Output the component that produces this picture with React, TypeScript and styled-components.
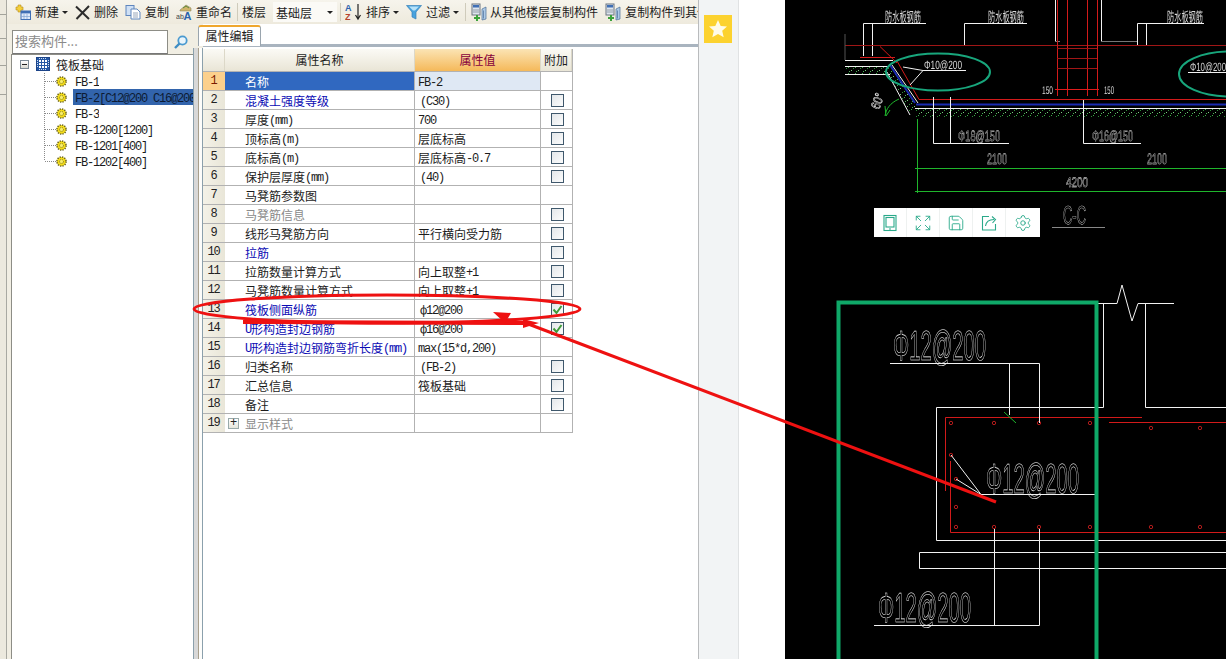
import React from "react";
import styled, { createGlobalStyle } from "styled-components";
import { Expand, Save, Settings } from "lucide-react";

const Global = createGlobalStyle`
  html, body { margin: 0; padding: 0; background: #fff; }
  body { font-family: "Noto Sans CJK SC", "Liberation Sans", sans-serif; font-size: 12px; color: #1c1c1c; }
`;

const Page = styled.div`
  position: relative;
  display: flex;
  width: 1226px;
  height: 659px;
  overflow: hidden;
  background: #fff;
`;

const AppWindow = styled.div`
  display: flex;
  flex: 0 0 698px;
  width: 698px;
  overflow: hidden;
  background: #f1eee3;
`;

const EdgeTabs = styled.div`
  flex: 0 0 7px;
  display: flex;
  flex-direction: column;
  background: #ece9de;
  border-right: 1px solid #a9a9a2;
  box-sizing: border-box;
`;

const EdgeTab = styled.div<{ $h: number }>`
  height: ${(p) => p.$h}px;
  flex: 0 0 auto;
  border-bottom: 1px solid #a3a39b;
  margin-bottom: 2px;
`;

const Main = styled.div`
  flex: 1;
  min-width: 0;
  display: flex;
  flex-direction: column;
`;

const Toolbar = styled.div`
  height: 24px;
  flex: 0 0 24px;
  display: flex;
  align-items: center;
  gap: 7px;
  padding-left: 8px;
  white-space: nowrap;
  overflow: hidden;
  background: linear-gradient(#f6f4ec, #eeeadd);
`;

const Tool = styled.div<{ $gap?: number }>`
  display: flex;
  flex: 0 0 auto;
  align-items: center;
  gap: ${(p) => p.$gap ?? 4}px;
  line-height: 16px;
`;

const Caret = styled.span`
  width: 0;
  height: 0;
  margin-left: -1px;
  border-left: 3px solid transparent;
  border-right: 3px solid transparent;
  border-top: 3px solid #222;
`;

const Separator = styled.span<{ $l: number; $r: number }>`
  flex: 0 0 1px;
  height: 18px;
  background: #cfcbbb;
  margin: 0 ${(p) => p.$r}px 0 ${(p) => p.$l}px;
`;

const Combo = styled.div`
  width: 64px;
  height: 20px;
  flex: 0 0 64px;
  box-sizing: border-box;
  display: flex;
  align-items: center;
  justify-content: space-between;
  padding: 0 4px 0 3px;
  background: #fbfaf6;
`;

const Body = styled.div`
  flex: 1;
  min-height: 0;
  display: flex;
`;

const LeftPanel = styled.div`
  flex: 0 0 186px;
  width: 186px;
  min-width: 0;
  display: flex;
  flex-direction: column;
  padding: 6px 0 0 4px;
  box-sizing: border-box;
`;

const SearchRow = styled.div`
  display: flex;
  height: 24px;
  flex: 0 0 24px;
  padding-left: 1px;
`;

const SearchInput = styled.div`
  width: 156px;
  box-sizing: border-box;
  background: #fff;
  border: 1px solid #8d8d86;
  border-bottom-color: #777;
  color: #8a8a8a;
  line-height: 20px;
  padding-left: 2px;
  font-size: 13px;
`;

const SearchButton = styled.div`
  flex: 1;
  display: flex;
  align-items: center;
  justify-content: center;
`;

const TreeBox = styled.div`
  flex: 1;
  min-width: 0;
  background: #fff;
  border-left: 1px solid #8d8d86;
  border-top: 1px solid #8d8d86;
  padding-top: 2px;
  overflow: hidden;
`;

const TreeRoot = styled.div`
  height: 16px;
  box-sizing: border-box;
  display: flex;
  align-items: center;
  padding: 0 0 2px 8px;
  font-size: 12px;
  gap: 6px;
`;

const Expander = styled.span`
  width: 9px;
  height: 9px;
  box-sizing: border-box;
  border: 1px solid #7b8a96;
  background: linear-gradient(#fff, #d8d8d0);
  display: flex;
  align-items: center;
  justify-content: center;
  margin-right: 1px;
  &::before {
    content: "";
    width: 5px;
    height: 1px;
    background: #222;
  }
`;

const TreeList = styled.div`
  margin: 0 0 0 32px;
  border-left: 1px dotted #8a8a8a;
  height: 87px;
`;

const TreeItem = styled.div`
  height: 16px;
  display: flex;
  align-items: center;
  white-space: nowrap;
  &::before {
    content: "";
    width: 11px;
    flex: 0 0 11px;
    border-top: 1px dotted #8a8a8a;
  }
`;

const TreeLabel = styled.span<{ $selected?: boolean }>`
  margin-left: 6px;
  padding-left: 2px;
  flex: ${(p) => (p.$selected ? "1" : "0 0 auto")};
  min-width: 0;
  height: 16px;
  line-height: 17px;
  overflow: hidden;
  color: ${(p) => (p.$selected ? "#0d1b33" : "#1c1c1c")};
  background: ${(p) => (p.$selected ? "#3264ac" : "transparent")};
`;

const Splitter = styled.div`
  flex: 0 0 10px;
  margin-top: 24px;
  background: linear-gradient(
    to right,
    #8ba0ac 0 1px,
    #d8d8d8 1px 5px,
    #a89f8c 5px 6px,
    #fdfdfb 6px 9px,
    #8ba0ac 9px 10px
  );
`;

const RightPanel = styled.div`
  flex: 1;
  min-width: 0;
  display: flex;
  flex-direction: column;
  background: #fff;
`;

const TabStrip = styled.div`
  height: 23px;
  flex: 0 0 23px;
  box-sizing: border-box;
  border-bottom: 3px solid #a9b4bf;
  padding-top: 1px;
  display: flex;
`;

const Tab = styled.div`
  position: relative;
  z-index: 1;
  margin-left: -5px;
  width: 63px;
  height: 21px;
  box-sizing: border-box;
  background: #fff;
  border: 1px solid #9aa5ae;
  border-top: 2px solid #efa72e;
  border-bottom: none;
  border-radius: 3px 3px 0 0;
  line-height: 18px;
  text-align: center;
  font-size: 12px;
`;

const PropGrid = styled.div`
  margin-top: 2px;
  width: 370px;
  box-sizing: border-box;
  border-right: 1px solid #b2b2b2;
`;

const GridRow = styled.div<{ $header?: boolean }>`
  display: grid;
  grid-template-columns: 22px 190px 126px 31px;
  height: ${(p) => (p.$header ? 23 : 19)}px;
  box-sizing: border-box;
  border-bottom: 1px solid #b2b2b2;
`;

const HeaderCell = styled.div<{ $active?: boolean }>`
  display: flex;
  align-items: center;
  justify-content: center;
  padding-bottom: 1px;
  box-sizing: border-box;
  border-right: 1px solid #dcd8c8;
  color: ${(p) => (p.$active ? "#86003c" : "#1c1c1c")};
  background: ${(p) =>
    p.$active
      ? "linear-gradient(#fbe4b4, #f5b95a)"
      : "linear-gradient(#fbfaf5, #e9e5d6)"};
`;

const NumCell = styled.div<{ $active?: boolean }>`
  display: flex;
  align-items: center;
  justify-content: center;
  font-family: "Liberation Mono", monospace;
  font-size: 12px;
  letter-spacing: -1.2px;
  padding-right: 1px;
  color: ${(p) => (p.$active ? "#7a1a00" : "#222")};
  background: ${(p) =>
    p.$active ? "#fcd08c" : "linear-gradient(to right, #f4f2e8, #e9e6d8)"};
`;

type NameKind = "normal" | "link" | "muted" | "selected";
const NAME_COLORS: Record<NameKind, string> = {
  normal: "#1c1c1c",
  link: "#0b0bb4",
  muted: "#8a8a8a",
  selected: "#fff",
};

const NameCell = styled.div<{ $kind: NameKind; $plus?: boolean }>`
  display: flex;
  align-items: center;
  padding-left: ${(p) => (p.$plus ? 3 : 20)}px;
  gap: 6px;
  white-space: nowrap;
  overflow: hidden;
  color: ${(p) => NAME_COLORS[p.$kind]};
  background: ${(p) => (p.$kind === "selected" ? "#3068c0" : "#fff")};
  border-right: 1px solid #b2b2b2;
`;

const PlusBox = styled.span`
  width: 11px;
  height: 11px;
  box-sizing: border-box;
  border: 1px solid #9aa;
  background: linear-gradient(#fff, #e6e6dc);
  color: #222;
  font-family: "Liberation Mono", monospace;
  font-size: 12px;
  line-height: 9px;
  text-align: center;
`;

const ValueCell = styled.div<{ $selected?: boolean; $indent?: boolean }>`
  display: flex;
  align-items: center;
  padding-left: ${(p) => (p.$indent ? 5 : 3)}px;
  white-space: nowrap;
  overflow: hidden;
  background: ${(p) => (p.$selected ? "#dfe8f4" : "#fff")};
  border-right: 1px solid #b2b2b2;
`;

const AddCell = styled.div`
  display: flex;
  align-items: center;
  justify-content: center;
  padding-left: 1px;
  background: #fff;
`;

const CheckBox = styled.span`
  width: 13px;
  height: 13px;
  box-sizing: border-box;
  border: 1px solid #3f586c;
  background: linear-gradient(135deg, #e3e7ea, #fcfcfc);
  display: flex;
  align-items: center;
  justify-content: center;
`;

const Latin = styled.span`
  font-family: "Liberation Mono", monospace;
  font-size: 12px;
  letter-spacing: -1.2px;
  vertical-align: 1px;
`;

const StarRail = styled.div`
  flex: 0 0 41px;
  box-sizing: border-box;
  background: #f2f4f5;
  border-left: 1px solid #b9bbbd;
  border-right: 1px solid #e0e2e3;
  padding: 15px 0 0 5px;
`;

const StarBox = styled.div`
  width: 28px;
  height: 28px;
  background: #fcd22f;
  display: flex;
  align-items: center;
  justify-content: center;
`;

const Gutter = styled.div`
  flex: 0 0 46px;
  background: #fff;
`;

const CadPanel = styled.div`
  position: relative;
  flex: 0 0 441px;
  height: 659px;
  background: #000;
`;

const CadSvg = styled.svg`
  display: block;
  width: 441px;
  height: 659px;
  will-change: transform;
`;

const CadLabel = styled.text<{ $outline?: number }>`
  font-family: "Liberation Sans", "Noto Sans CJK SC", sans-serif;
  text-rendering: geometricPrecision;
  fill: ${(p) => (p.$outline ? "none" : "#d8d8d8")};
  stroke: ${(p) => (p.$outline ? "#fff" : "none")};
  stroke-width: ${(p) => p.$outline ?? 0};
`;

const FloatBar = styled.div`
  position: absolute;
  left: 89px;
  top: 208px;
  display: flex;
  height: 29px;
  background: #fff;
`;

const FloatButton = styled.div`
  width: 33px;
  box-sizing: border-box;
  display: flex;
  align-items: center;
  justify-content: center;
  color: #2aa98a;
  border-right: 1px solid #eef1f0;
  &:last-child {
    border-right: none;
    width: 34px;
  }
`;

const Annotation = styled.svg`
  position: absolute;
  left: 0;
  top: 0;
  width: 1226px;
  height: 659px;
  pointer-events: none;
`;

function mixed(text: string) {
  const parts = text.match(/[\x20-\x7eф]+|[^\x20-\x7eф]+/g) ?? [];
  return parts.map((part, i) =>
    /^[\x20-\x7eф]/.test(part) ? <Latin key={i}>{part}</Latin> : <span key={i}>{part}</span>
  );
}

const NewIcon = () => (
  <svg width="16" height="16" viewBox="0 0 16 16">
    <path d="M1 3h2V1h3v2h2v3H6v2H3V6H1z" fill="#f4cf3a" stroke="#b68a1c" strokeWidth=".6" />
    <rect x="6" y="7" width="9.5" height="8.5" fill="#dfeafa" stroke="#3f6fb5" />
    <rect x="6" y="7" width="9.5" height="2.4" fill="#3f6fb5" />
    <path d="M9 10v5M12 10v5M6 12.5h9" stroke="#7fa2d0" strokeWidth=".7" />
  </svg>
);
const DeleteIcon = () => (
  <svg width="15" height="15" viewBox="0 0 15 15">
    <path d="M1 1.5 14 14M14 1 1.5 14" stroke="#2c2c2c" strokeWidth="2" fill="none" />
  </svg>
);
const CopyIcon = () => (
  <svg width="16" height="16" viewBox="0 0 16 16">
    <rect x="1" y="1.5" width="8" height="10" fill="#cfe0f5" stroke="#5f86bd" />
    <path d="M6 5h6l3 3v7H6z" fill="#fff" stroke="#5f86bd" />
    <path d="M8 9h5M8 11h5M8 13h5" stroke="#7d8fa8" strokeWidth=".8" />
  </svg>
);
const RenameIcon = () => (
  <svg width="16" height="16" viewBox="0 0 16 16">
    <path d="M4 6 10 1l5 3v3H4z" fill="#d0b46a" stroke="#8d8a6a" strokeWidth=".6" />
    <path d="M7 4l3-2 3 2" stroke="#5d8a3d" fill="none" />
    <text x="0" y="15" fontSize="7" fontFamily="Liberation Sans" fill="#444">ab</text>
    <text x="7.5" y="15.5" fontSize="11" fontWeight="700" fontFamily="Liberation Sans" fill="#2b62ad">A</text>
  </svg>
);
const SortIcon = () => (
  <svg width="17" height="18" viewBox="0 0 17 18">
    <text x="0" y="8" fontSize="9" fontWeight="700" fontFamily="Liberation Sans" fill="#2b62ad">A</text>
    <text x="0" y="17" fontSize="9" fontWeight="700" fontFamily="Liberation Sans" fill="#b5432e">Z</text>
    <path d="M13 1v14M10.5 12l2.5 4 2.5-4" stroke="#222" strokeWidth="1.2" fill="none" />
  </svg>
);
const FunnelIcon = () => (
  <svg width="16" height="16" viewBox="0 0 16 16">
    <path d="M0.5 1.5h15L10 8v7l-4-2V8z" fill="#49a3de" stroke="#3b82b8" strokeWidth=".7" />
    <path d="M3 2.5h10L9 6.5H7z" fill="#b8e2f8" />
  </svg>
);
const FloorCopyIcon = () => (
  <svg width="16" height="18" viewBox="0 0 16 18">
    <rect x="1" y="1" width="8" height="11" fill="#dfe6ee" stroke="#6b7480" />
    <rect x="2" y="2" width="6" height="2.5" fill="#3f6fb5" />
    <path d="M2 7h6M2 9h6" stroke="#7d8a98" strokeWidth=".8" />
    <path d="M3 14h2v-2h2v2h2v2H7v2H5v-2H3z" fill="#3ca33c" />
    <path d="M11 6l4-2v12l-4 1zM12.5 7.5v8" fill="#aecbe8" stroke="#4c6f96" strokeWidth=".7" />
  </svg>
);
const SearchIcon = () => (
  <svg width="16" height="16" viewBox="0 0 16 16">
    <circle cx="9.5" cy="6.5" r="4.2" fill="#eaf5fb" stroke="#4a9ad0" strokeWidth="1.8" />
    <path d="M6.5 9.5 2 14" stroke="#3f8dc4" strokeWidth="2.4" />
  </svg>
);
const RootIcon = () => (
  <svg width="14" height="14" viewBox="0 0 14 14">
    <rect x=".5" y=".5" width="13" height="13" fill="#2557a4" stroke="#1c4488" />
    <rect x="3" y="3" width="8" height="8" fill="#fff" />
    <path d="M5.5 3v8M8.5 3v8M3 5.5h8M3 8.5h8" stroke="#2557a4" />
    <path d="M1.5 3v8M12.5 3v8M3 1.5h8M3 12.5h8" stroke="#cfe0f5" strokeDasharray="1 1" />
  </svg>
);
const GearIcon = () => (
  <svg width="11" height="11" viewBox="0 0 11 11">
    <circle cx="5.5" cy="5.5" r="4.6" fill="#f4dc18" stroke="#6b6420" strokeWidth="1.5" strokeDasharray="1.3 1.1" />
    <circle cx="5.5" cy="5.5" r="2" fill="#f8ee6a" stroke="#6b6420" strokeWidth=".8" strokeDasharray="1 .8" />
  </svg>
);
const Check = () => (
  <svg width="11" height="11" viewBox="0 0 11 11">
    <path d="M1.5 5.5 4.5 9 9.5 2" stroke="#3f9a3a" strokeWidth="2" fill="none" />
  </svg>
);

const TabletIcon = () => (
  <svg width="18" height="18" viewBox="0 0 18 18" fill="none" stroke="currentColor" strokeWidth="1.1">
    <rect x="3" y="1.5" width="12" height="15" />
    <rect x="5" y="3.5" width="8" height="9.5" />
    <path d="M8 15h2" />
  </svg>
);

const ShareIcon = () => (
  <svg width="18" height="18" viewBox="0 0 18 18" fill="none" stroke="currentColor" strokeWidth="1.1">
    <path d="M9 2.5H2.5v13.5h13V10" />
    <path d="M5.5 12c.5-4 3.5-6.5 8.5-6.5" />
    <path d="M12 2.5 15.5 5.5 12.5 9" />
  </svg>
);

type Row = { name: string; value?: string; kind?: NameKind; check?: boolean; checked?: boolean; plus?: boolean; indent?: boolean };
const ROWS: Row[] = [
  { name: "名称", value: "FB-2", kind: "selected" },
  { name: "混凝土强度等级", value: "(C30)", kind: "link", check: true, indent: true },
  { name: "厚度(mm)", value: "700", check: true },
  { name: "顶标高(m)", value: "层底标高", check: true },
  { name: "底标高(m)", value: "层底标高-0.7", check: true },
  { name: "保护层厚度(mm)", value: "(40)", check: true, indent: true },
  { name: "马凳筋参数图" },
  { name: "马凳筋信息", kind: "muted", check: true },
  { name: "线形马凳筋方向", value: "平行横向受力筋", check: true },
  { name: "拉筋", kind: "link", check: true },
  { name: "拉筋数量计算方式", value: "向上取整+1", check: true },
  { name: "马凳筋数量计算方式", value: "向上取整+1", check: true },
  { name: "筏板侧面纵筋", value: "ф12@200", kind: "link", check: true, checked: true, indent: true },
  { name: "U形构造封边钢筋", value: "ф16@200", kind: "link", check: true, checked: true, indent: true },
  { name: "U形构造封边钢筋弯折长度(mm)", value: "max(15*d,200)", kind: "link" },
  { name: "归类名称", value: "(FB-2)", check: true, indent: true },
  { name: "汇总信息", value: "筏板基础", check: true },
  { name: "备注", check: true },
  { name: "显示样式", kind: "muted", plus: true },
];

const TREE = ["FB-1", "FB-2[C12@200 C16@200]", "FB-3", "FB-1200[1200]", "FB-1201[400]", "FB-1202[400]"];

const W = "#f2f2f2";
const R = "#d21a1a";
const DR = "#a01616";
const G = "#1fb52c";

function Seg({ d, c = W, w = 1 }: { d: string; c?: string; w?: number }) {
  return <path d={d} stroke={c} strokeWidth={w} fill="none" />;
}

const BAR_TOP: [number, number][] = [[951, 423], [994, 423], [1039, 423], [1090, 423], [1151, 428], [1200, 428]];
const BAR_BOTTOM: [number, number][] = [[956, 527], [994, 527], [1039, 527], [1090, 527], [1151, 527], [1200, 527]];
const BAR_LEFT: [number, number][] = [[951, 455], [956, 479], [956, 507]];

function CadDrawing() {
  return (
    <CadSvg viewBox="785 0 441 659">
      <defs>
        <pattern id="speckle" width="7" height="6" patternUnits="userSpaceOnUse">
          <rect x="1" y="1" width="1" height="1" fill="#3fb04a" />
          <rect x="4" y="4" width="1" height="1" fill="#7ccc80" />
          <rect x="6" y="2" width="1" height="1" fill="#2a8f36" />
          <rect x="2" y="5" width="1" height="1" fill="#4ab854" />
        </pattern>
      </defs>

      {/* upper section */}
      <Seg d="M863.5 23.5H926M863.5 23.5V56M872.5 23.5V56" />
      <Seg d="M964.5 23.5H1027M964.5 23.5V46" />
      <Seg d="M1137.5 23.5H1204M1137.5 23.5V46M1146.5 23.5V46" />
      <Seg d="M1055.5 0V41M1101.5 0V41" />
      <Seg d="M1101 41.5H1137M1060 41.5H1055" c="#777" />
      <Seg d="M845 45.5H1226" c={DR} />
      <Seg d="M845 34V60" c="#555" />
      <Seg d="M1057.5 0V96M1067.5 0V96M1087.5 0V96M1097.5 0V96" c={R} />
      <Seg d="M1057 48.5H1097M1057 58.5H1097M1057 68.5H1097" c={DR} />
      <Seg d="M845 60.5H893M845 66.5H888M845 74.5H890" />
      <Seg d="M860 57.5H895M880 46.5 897 63" c={R} />
      <rect x="845" y="67" width="45" height="7" fill="url(#speckle)" />
      <polygon points="887,72 910,115 917,108 893,68" fill="url(#speckle)" />
      <Seg d="M892 65 918 103" />
      <Seg d="M890 65 915 103" c="#1a2bb0" w={2} />
      <Seg d="M887 72 910 115" />
      <Seg d="M897 61 919 99.5H1226" c={R} />
      <Seg d="M916 104.5H1226" c="#1a2bb0" w={2} />
      <Seg d="M915 108.5H1226" />
      <rect x="915" y="109" width="311" height="8" fill="url(#speckle)" />
      <Seg d="M885 116c1-7 5-13 14-17M885 106l1 10 4-6" c={G} />
      <CadLabel x={0} y={0} fontSize={13} textLength={16} lengthAdjust="spacingAndGlyphs" transform="translate(879,110) rotate(-70)" $outline={0.5}>60°</CadLabel>

      <ellipse cx="938" cy="72" rx="52" ry="18.5" fill="none" stroke="#18a67c" strokeWidth="2" />
      <ellipse cx="1230" cy="74" rx="51" ry="22.5" fill="none" stroke="#18a67c" strokeWidth="2" />
      <CadLabel x={924} y={69} fontSize={12} textLength={38} lengthAdjust="spacingAndGlyphs">Φ10@200</CadLabel>
      <Seg d="M966 70.5H923L903 67M923 70.5 910 85" />
      <CadLabel x={1190} y={71} fontSize={12} textLength={36} lengthAdjust="spacingAndGlyphs">Φ10@200</CadLabel>
      <Seg d="M1188 72.5H1226" />

      <CadLabel x={885} y={22} fontSize={14} textLength={36} lengthAdjust="spacingAndGlyphs">防水板钢筋</CadLabel>
      <CadLabel x={988} y={22} fontSize={14} textLength={36} lengthAdjust="spacingAndGlyphs">防水板钢筋</CadLabel>
      <CadLabel x={1167} y={22} fontSize={14} textLength={36} lengthAdjust="spacingAndGlyphs">防水板钢筋</CadLabel>

      <CadLabel x={1042} y={94} fontSize={11} textLength={11} lengthAdjust="spacingAndGlyphs">150</CadLabel>
      <CadLabel x={1104} y={94} fontSize={11} textLength={10} lengthAdjust="spacingAndGlyphs">150</CadLabel>
      <Seg d="M1055 89.5H1099" c="#e01c1c" />
      <Seg d="M933.5 97V143.5M950.5 97V143.5H1009" />
      <Seg d="M933.5 143.5H951" />
      <CadLabel x={958} y={141} fontSize={15} textLength={42} lengthAdjust="spacingAndGlyphs" $outline={0.35}>Φ18@150</CadLabel>
      <Seg d="M1083.5 100V143.5H1141" />
      <CadLabel x={1092} y={141} fontSize={15} textLength={41} lengthAdjust="spacingAndGlyphs" $outline={0.35}>Φ16@150</CadLabel>
      <CadLabel x={987} y={164} fontSize={15} textLength={20} lengthAdjust="spacingAndGlyphs" $outline={0.35}>2100</CadLabel>
      <CadLabel x={1147} y={164} fontSize={15} textLength={20} lengthAdjust="spacingAndGlyphs" $outline={0.35}>2100</CadLabel>
      <Seg d="M915 168.5H1226M915 191.5H1226M917.5 119V193" c={G} />
      <CadLabel x={1066} y={187} fontSize={14} textLength={22} lengthAdjust="spacingAndGlyphs" $outline={0.35}>4200</CadLabel>
      <CadLabel x={1063} y={224} fontSize={26} textLength={23} lengthAdjust="spacingAndGlyphs" $outline={0.4}>C-C</CadLabel>
      <Seg d="M1052 227.5H1105" c="#888" />

      {/* lower section */}
      <Seg d="M1079 303.5H1117L1122 285 1132 321 1138 303.5H1174" />
      <Seg d="M1103.5 303V407.5H936.5V540.5H1226" />
      <Seg d="M1145.5 303V407.5H1226" />
      <Seg d="M919.5 552.5H1226M919.5 552.5V568.5H1226" />
      <Seg d="M1142 417.5H945.5V491" c={R} />
      <Seg d="M1109 422.5H1226" c={R} />
      <Seg d="M950.5 461V532.5H1226" c={R} />
      {[...BAR_TOP, ...BAR_BOTTOM, ...BAR_LEFT].map(([cx, cy]) => (
        <circle key={`${cx}-${cy}`} cx={cx} cy={cy} r="1.7" fill="none" stroke="#d22" strokeWidth=".8" />
      ))}

      <CadLabel $outline={0.55} x={893} y={360} fontSize={42} textLength={93} lengthAdjust="spacingAndGlyphs">Φ12@200</CadLabel>
      <Seg d="M890 363.5H1039.5V423M1009.5 363.5V415" />
      <Seg d="M1004 412 1016 423" c={G} />
      <CadLabel $outline={0.55} x={986} y={493} fontSize={42} textLength={93} lengthAdjust="spacingAndGlyphs">Φ12@200</CadLabel>
      <Seg d="M1095 494.5H981L951 455M981 494.5 956 479" />
      <CadLabel $outline={0.55} x={878} y={622} fontSize={42} textLength={93} lengthAdjust="spacingAndGlyphs">Φ12@200</CadLabel>
      <Seg d="M874 625.5H1039.5V529M994.5 529V625.5" />

      <path d="M838.5 659V302.5H1096.5V659" fill="none" stroke="#0fa868" strokeWidth="4" />
    </CadSvg>
  );
}

export default function App() {
  return (
    <Page>
      <Global />
      <AppWindow>
        <EdgeTabs>
          <EdgeTab $h={14} />
          <EdgeTab $h={21} />
          <EdgeTab $h={24} />
          <EdgeTab $h={26} />
        </EdgeTabs>
        <Main>
          <Toolbar>
            <Tool><NewIcon /><span>新建</span><Caret /></Tool>
            <Tool><DeleteIcon /><span>删除</span></Tool>
            <Tool><CopyIcon /><span>复制</span></Tool>
            <Tool><RenameIcon /><span>重命名</span></Tool>
            <Separator $l={-2} $r={-3} />
            <Tool><span>楼层</span></Tool>
            <Combo><span>基础层</span><Caret /></Combo>
            <Separator $l={-4} $r={-3} />
            <Tool><SortIcon /><span>排序</span><Caret /></Tool>
            <Tool><FunnelIcon /><span>过滤</span><Caret /></Tool>
            <Separator $l={-1} $r={-2} />
            <Tool $gap={3}><FloorCopyIcon /><span>从其他楼层复制构件</span></Tool>
            <Tool $gap={4}><FloorCopyIcon /><span>复制构件到其他楼层</span></Tool>
          </Toolbar>
          <Body>
            <LeftPanel>
              <SearchRow>
                <SearchInput>搜索构件...</SearchInput>
                <SearchButton><SearchIcon /></SearchButton>
              </SearchRow>
              <TreeBox>
                <TreeRoot><Expander /><RootIcon /><span>筏板基础</span></TreeRoot>
                <TreeList>
                  {TREE.map((item, i) => (
                    <TreeItem key={item}>
                      <GearIcon />
                      <TreeLabel $selected={i === 1}><Latin>{item}</Latin></TreeLabel>
                    </TreeItem>
                  ))}
                </TreeList>
              </TreeBox>
            </LeftPanel>
            <Splitter />
            <RightPanel>
              <TabStrip><Tab>属性编辑</Tab></TabStrip>
              <PropGrid>
                <GridRow $header>
                  <HeaderCell />
                  <HeaderCell>属性名称</HeaderCell>
                  <HeaderCell $active>属性值</HeaderCell>
                  <HeaderCell>附加</HeaderCell>
                </GridRow>
                {ROWS.map((row, i) => (
                  <GridRow key={row.name}>
                    <NumCell $active={i === 0}>{i + 1}</NumCell>
                    <NameCell $kind={row.kind ?? "normal"} $plus={row.plus}>
                      {row.plus && <PlusBox>+</PlusBox>}
                      <span>{mixed(row.name)}</span>
                    </NameCell>
                    <ValueCell $selected={i === 0} $indent={row.indent}>
                      <span>{row.value ? mixed(row.value) : null}</span>
                    </ValueCell>
                    <AddCell>
                      {row.check && <CheckBox>{row.checked && <Check />}</CheckBox>}
                    </AddCell>
                  </GridRow>
                ))}
              </PropGrid>
            </RightPanel>
          </Body>
        </Main>
      </AppWindow>
      <StarRail>
        <StarBox>
          <svg width="20" height="20" viewBox="0 0 20 20">
            <path d="M10 1l2.7 6 6.3.6-4.8 4.2 1.5 6.4L10 15l-5.7 3.2 1.5-6.4L1 7.6 7.3 7z" fill="#fffbe8" />
          </svg>
        </StarBox>
      </StarRail>
      <Gutter />
      <CadPanel>
        <CadDrawing />
        <FloatBar>
          <FloatButton><TabletIcon /></FloatButton>
          <FloatButton><Expand size={18} strokeWidth={1.2} /></FloatButton>
          <FloatButton><Save size={18} strokeWidth={1.2} /></FloatButton>
          <FloatButton><ShareIcon /></FloatButton>
          <FloatButton><Settings size={18} strokeWidth={1.2} /></FloatButton>
        </FloatBar>
      </CadPanel>
      <Annotation viewBox="0 0 1226 659">
        <ellipse cx="387" cy="309" rx="193" ry="14" fill="none" stroke="#ee1111" strokeWidth="3" />
        <path d="M243 322 523 323" stroke="#ee1111" strokeWidth="4" fill="none" />
        <path d="M523 322 996 502" stroke="#ee1111" strokeWidth="3" fill="none" />
        <polygon points="493,312 511,313 505,323" fill="#ee1111" />
        <polygon points="523,319 539,323 523,328" fill="#ee1111" />
      </Annotation>
    </Page>
  );
}
